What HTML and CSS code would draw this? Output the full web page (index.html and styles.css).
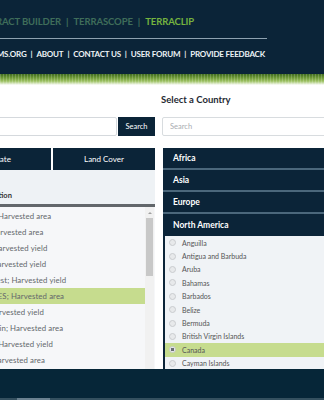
FILE: index.html
```html
<!DOCTYPE html>
<html>

<head>
	<meta charset="utf-8">
	<title>TerraClip</title>
	<link rel="stylesheet" href="styles.css">
</head>

<body>
	<div class="site-header">
		<div class="nav">
			<div class="nav-apps">
				<span>DATA FINDER</span><i>|</i>
				<span>DATA EXTRACT BUILDER</span><i>|</i>
				<span>TERRASCOPE</span><i>|</i>
				<span class="current">TERRACLIP</span>
			</div>
			<div class="nav-rule"></div>
			<div class="nav-links">
				<span>TERRAPOP</span><i>|</i>
				<span>IPUMS.ORG</span><i>|</i>
				<span>ABOUT</span><i>|</i>
				<span>CONTACT US</span><i>|</i>
				<span>USER FORUM</span><i>|</i>
				<span>PROVIDE FEEDBACK</span>
			</div>
		</div>
	</div>
	<div class="grass"></div>

	<div class="main">
		<div class="left-col">
			<div class="search-row">
				<input class="search-input" type="text">
				<button class="search-btn">Search</button>
			</div>
			<div class="tabs">
				<div class="tab">Climate</div>
				<div class="tab tab-land">Land Cover</div>
			</div>
			<div class="panel">
				<div class="panel-title">Agricultural Production</div>
				<div class="panel-bar"></div>
				<div class="var-box">
					<ul class="var-list">
						<li>Coconut; Harvested area</li>
						<li>Barley; Harvested area</li>
						<li>Cotton; Harvested yield</li>
						<li>Potato; Harvested yield</li>
						<li>Cereals, rest; Harvested yield</li>
						<li class="selected">TOMATOES; Harvested area</li>
						<li>Maize; Harvested yield</li>
						<li>Cereal grain; Harvested area</li>
						<li>Soybean; Harvested yield</li>
						<li>Wheat; Harvested area</li>
					</ul>
					<div class="scrollbar">
						<div class="scroll-up"></div>
						<div class="scroll-thumb"></div>
					</div>
				</div>
			</div>
		</div>

		<div class="right-col">
			<div class="col-title">Select a Country</div>
			<input class="country-search" type="text" placeholder="Search">
			<div class="regions">
				<div class="region">Africa</div>
				<div class="region">Asia</div>
				<div class="region">Europe</div>
				<div class="region">North America</div>
			</div>
			<ul class="country-list">
				<li><span class="radio"></span>Anguilla</li>
				<li><span class="radio"></span>Antigua and Barbuda</li>
				<li><span class="radio"></span>Aruba</li>
				<li><span class="radio"></span>Bahamas</li>
				<li><span class="radio"></span>Barbados</li>
				<li><span class="radio"></span>Belize</li>
				<li><span class="radio"></span>Bermuda</li>
				<li><span class="radio"></span>British Virgin Islands</li>
				<li class="selected"><span class="radio checked"></span>Canada</li>
				<li><span class="radio"></span>Cayman Islands</li>
			</ul>
		</div>
	</div>

	<div class="footer">
		<div class="footer-tab"></div>
	</div>
</body>

</html>
```

FILE: styles.css
```css
body {
	margin: 0;
	width: 324px;
	height: 400px;
	overflow: hidden;
	background: #ffffff;
	font-family: Lato, "Open Sans", sans-serif;
	color: #333333;
}

ul {
	list-style: none;
	margin: 0;
	padding: 0;
}

/* header */
.site-header {
	background: #0b2438;
	height: 74px;
}

.nav {
	width: 267px;
	padding-top: 16px;
}

.nav i {
	font-style: normal;
	margin: 0 5px;
}

.nav-apps {
	display: flex;
	justify-content: flex-end;
	white-space: nowrap;
	padding-right: 73px;
	font-size: 9.5px;
	font-weight: bold;
	line-height: 12px;
	color: #3f6d5a;
	letter-spacing: -0.1px;
}

.nav-apps .current {
	color: #75b33f;
}

.nav-rule {
	margin-top: 10px;
	border-top: 1px solid #8ea2b0;
}

.nav-links {
	display: flex;
	justify-content: flex-end;
	white-space: nowrap;
	padding-right: 2px;
	margin-top: 10px;
	font-size: 8px;
	font-weight: bold;
	line-height: 10px;
	letter-spacing: -0.2px;
	color: #eef3f6;
}

.nav-links i {
	margin: 0 4px;
}

.grass {
	height: 11px;
	background:
		repeating-linear-gradient(90deg, rgba(255, 255, 255, 0.18) 0 1px, transparent 1px 3px),
		linear-gradient(#3f6b1f 0, #6f9a37 35%, #9cc162 65%, #ffffff 100%);
}

/* main columns */
.main {
	display: flex;
	gap: 7px;
	height: 284px;
	margin-left: -66px;
}

.left-col {
	width: 221px;
	flex-shrink: 0;
	display: flex;
	flex-direction: column;
	padding-top: 32px;
}

.search-row {
	display: flex;
	gap: 1px;
	height: 19px;
}

.search-input {
	flex: 1;
	margin: 0;
	border: 1px solid #d5d9dd;
	border-radius: 2px;
	box-sizing: border-box;
}

.search-btn {
	width: 37px;
	margin: 0;
	padding: 0;
	border: none;
	background: #0b2438;
	color: #ffffff;
	font-family: Lato, sans-serif;
	font-size: 7.5px;
}

.tabs {
	display: flex;
	gap: 2px;
	margin-top: 12px;
	height: 22px;
}

.tab {
	flex: 1;
	background: #0b2438;
	color: #ffffff;
	font-size: 8px;
	line-height: 22px;
	text-align: center;
	padding-left: 10px;
}

.tab-land {
	flex: none;
	width: 102px;
	padding-left: 0;
}

.panel {
	flex: 1;
	background: #eef2f5;
	display: flex;
	flex-direction: column;
}

.panel-title {
	margin-top: 20px;
	font-size: 7.5px;
	font-weight: bold;
	line-height: 12px;
	color: #333333;
}

.panel-bar {
	margin-top: 2px;
	height: 3px;
	background: #62676b;
}

.var-box {
	flex: 1;
	display: flex;
	background: #f6f7f9;
	overflow: hidden;
}

.var-list {
	flex: 1;
	padding-top: 1px;
}

.var-list li {
	height: 16px;
	line-height: 16px;
	padding-left: 30px;
	font-size: 7.8px;
	letter-spacing: 0.1px;
	color: #63676b;
	white-space: nowrap;
}

.var-list li.selected {
	background: #c6dc8e;
}

.scrollbar {
	width: 9px;
	margin-right: 1px;
	background: #f1f1f1;
}

.scroll-up {
	height: 0;
	width: 0;
	margin: 5px auto 0;
	border-left: 2px solid transparent;
	border-right: 2px solid transparent;
	border-bottom: 2px solid #a0a0a0;
}

.scroll-thumb {
	margin: 4px 1px 0;
	height: 58px;
	background: #c8c8c8;
}

/* country picker */
.right-col {
	width: 200px;
	flex-shrink: 0;
	display: flex;
	flex-direction: column;
	padding-top: 8px;
}

.col-title {
	font-size: 9.5px;
	font-weight: bold;
	line-height: 14px;
	color: #1f2a33;
	margin-left: -1px;
}

.country-search {
	margin: 10px 0 0;
	height: 19px;
	box-sizing: border-box;
	border: 1px solid #d8dcdf;
	border-radius: 2px;
	padding: 0 7px;
	font-family: Lato, sans-serif;
	font-size: 7.5px;
}

.country-search::placeholder {
	color: #a9adb1;
}

.regions {
	margin-top: 12px;
	margin-left: 1px;
	background: #0b2438;
}

.region {
	height: 20px;
	line-height: 20px;
	border-bottom: 2px solid #4b677b;
	padding-left: 10px;
	color: #ffffff;
	font-size: 8.5px;
	font-weight: bold;
}

.region:last-child {
	border-bottom: none;
	height: 22px;
	line-height: 22px;
}

.country-list {
	flex: 1;
	margin-left: 1px;
	background: #f0f3f6;
	border-left: 2px solid #0b2438;
	overflow: hidden;
}

.country-list li {
	display: flex;
	align-items: center;
	height: 13.4px;
	padding-left: 4px;
	font-size: 7px;
	color: #555555;
	white-space: nowrap;
}

.country-list li.selected {
	background: #c6dc8e;
}

.radio {
	width: 5px;
	height: 5px;
	border: 1px solid #c9cccf;
	border-radius: 50%;
	background: #e7e9eb;
	margin-right: 6px;
}

.radio.checked {
	background: radial-gradient(circle, #6a6e72 0 1.5px, #e7e9eb 2px);
}

/* footer */
.footer {
	height: 31px;
	background: #062638;
	border-bottom: 2px solid #34505f;
	box-sizing: border-box;
	display: flex;
	align-items: flex-end;
}

.footer-tab {
	width: 33px;
	height: 2px;
	margin-left: 17px;
	margin-bottom: -2px;
	background: #6a8190;
}
```
